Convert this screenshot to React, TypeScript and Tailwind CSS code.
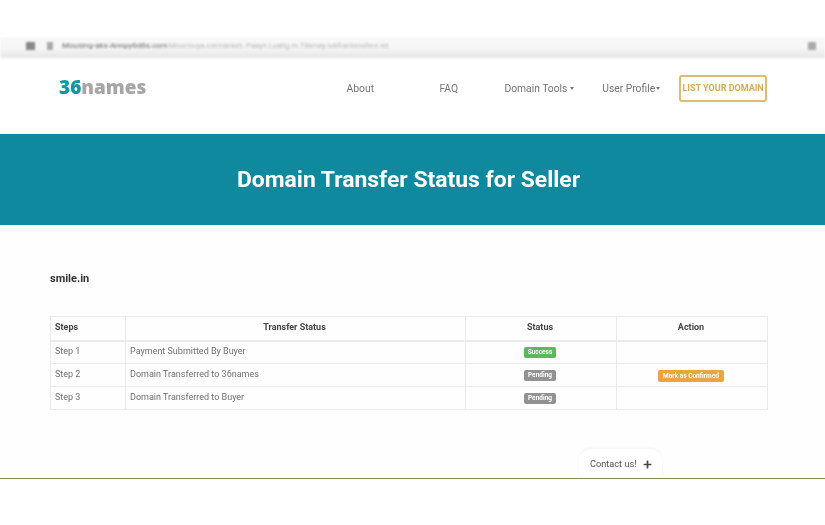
import { FaPlus } from 'react-icons/fa';

const rows = [
  { step: 'Step 1', transfer: 'Payment Submitted By Buyer', status: 'Success', action: false },
  { step: 'Step 2', transfer: 'Domain Transferred to 36names', status: 'Pending', action: true },
  { step: 'Step 3', transfer: 'Domain Transferred to Buyer', status: 'Pending', action: false },
];

function Caret() {
  return <span className="inline-block w-0 h-0 border-x-[2.5px] border-x-transparent border-t-[3px] border-t-[#777]" />;
}

export default function App() {
  return (
    <div className="w-[825px] h-[525px] overflow-hidden bg-white font-['Roboto',sans-serif] flex flex-col relative blur-[0.4px]">
      {/* Blurred browser bar */}
      <div className="h-[37px] shrink-0 bg-white" />
      <div className="h-[21px] shrink-0 bg-gradient-to-b from-[#f8f8f8] via-[#f7f7f7] to-[#e6e6e6] flex items-center pl-[26px] pr-[9px] pb-[3px] blur-[1.2px]">
        <div className="w-[9px] h-[8px] bg-[#888] mr-[12px]" />
        <div className="w-[6px] h-[8px] bg-[#aaa] mr-[9px]" />
        <span className="text-[8px] leading-none text-[#666] whitespace-nowrap mr-[1px]">Mousing-aks-Annpy6d6s.com</span>
        <span className="text-[7.5px] leading-none text-[#b5b5b5] whitespace-nowrap">Mourmuya.cormanket.-Paayn.Luatig.m.Tilkmay.iubfrantensfere.nd</span>
        <div className="w-[8px] h-[8px] bg-[#aaa] ml-auto" />
      </div>

      {/* Header */}
      <header className="h-[76px] shrink-0 flex items-center pl-[59px] pr-[58px] pb-[15px] bg-white text-[#767676] text-[10.3px]">
        <div className="w-[288px] font-['Open_Sans',sans-serif] font-extrabold text-[19px] leading-none -mt-[2px]">
          <span className="text-[#0c9aa6]">36</span>
          <span className="text-[#a6a6a6]">names</span>
        </div>
        <span className="w-[92px]">About</span>
        <span className="w-[66px] pl-[1px]">FAQ</span>
        <span className="w-[97px] flex items-center gap-[3px]">Domain Tools <Caret /></span>
        <span className="w-[78px] pl-[1px] flex items-center gap-[1px]">User Profile<Caret /></span>
        <button className="w-[88px] h-[27px] border-2 border-[#dfba70] rounded-[3px] text-[#dfa856] text-[9px] font-bold whitespace-nowrap">
          LIST YOUR DOMAIN
        </button>
      </header>

      {/* Banner */}
      <div className="h-[91px] shrink-0 bg-[#0f899e] flex items-center justify-center pr-[8px] pt-[2px] text-white text-[22.9px] font-bold">
        Domain Transfer Status for Seller
      </div>

      {/* Content */}
      <main className="h-[254px] shrink-0 bg-[#fefefe] pl-[50px] pr-[58px] pt-[46px] border-b border-b-[#7d8a63]">
        <h2 className="text-[11px] font-bold text-[#333] leading-[16px] mb-[29px]">smile.in</h2>
        <table className="w-[717px] table-fixed border-collapse text-[9px] leading-[14px] text-[#707070]">
          <colgroup>
            <col className="w-[75px]" />
            <col className="w-[340px]" />
            <col className="w-[151px]" />
            <col className="w-[151px]" />
          </colgroup>
          <thead>
            <tr className="h-[24px] text-[#444]">
              <th className="border border-[#ebebeb] border-b-2 pl-[4px] pb-[3px] text-left font-bold">Steps</th>
              <th className="border border-[#ebebeb] border-b-2 pr-[2px] pb-[3px] font-bold">Transfer Status</th>
              <th className="border border-[#ebebeb] border-b-2 pr-[2px] pb-[3px] font-bold">Status</th>
              <th className="border border-[#ebebeb] border-b-2 pr-[2px] pb-[3px] font-bold">Action</th>
            </tr>
          </thead>
          <tbody>
            {rows.map((row) => (
              <tr key={row.step} className="h-[23px]">
                <td className="border border-[#ebebeb] pl-[4px] pb-[3px]">{row.step}</td>
                <td className="border border-[#ebebeb] pl-[4px] pb-[3px]">{row.transfer}</td>
                <td className="border border-[#ebebeb] pr-[2px] text-center">
                  <span className={`inline-block w-[32px] h-[11px] leading-[11px] rounded-[2px] text-white text-[6.5px] font-bold align-middle ${row.status === 'Success' ? 'bg-[#5cb85c]' : 'bg-[#929292]'}`}>
                    {row.status}
                  </span>
                </td>
                <td className="border border-[#ebebeb] pr-[2px] text-center">
                  {row.action && (
                    <span className="inline-block w-[66px] h-[12px] leading-[12px] rounded-[2px] bg-[#e9a63f] text-white text-[6.5px] font-bold align-middle">
                      Mark as Confirmed
                    </span>
                  )}
                </td>
              </tr>
            ))}
          </tbody>
        </table>
      </main>

      {/* Contact tab */}
      <div className="absolute left-[579px] top-[449px] w-[83px] h-[29px] bg-white rounded-t-[12px] shadow-[0_-1px_3px_rgba(0,0,0,0.05)] flex items-center pl-[11px] pt-[1px] text-[9.2px] text-[#555]">
        <span className="w-[53px]">Contact us!</span>
        <FaPlus className="w-[9px] h-[9px] text-[#444]" />
      </div>
    </div>
  );
}
